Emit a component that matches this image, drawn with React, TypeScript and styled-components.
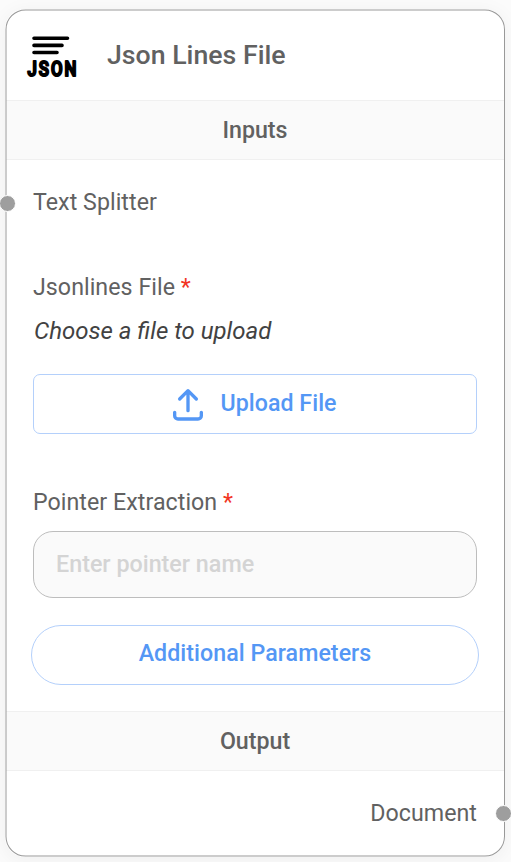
import React from "react";
import styled, { createGlobalStyle } from "styled-components";

const GlobalStyle = createGlobalStyle`
  *, *::before, *::after { box-sizing: border-box; }
  body {
    margin: 0;
    background: #fbfbfb;
    font-family: Roboto, "Liberation Sans", sans-serif;
    color: #616161;
  }
`;

const Canvas = styled.main`
  height: 862px;
  padding: 9px 6px 5px 5px;
  overflow: hidden;
`;

const NodeCard = styled.article`
  position: relative;
  height: 848px;
  display: flex;
  flex-direction: column;
  padding: 2px 1px;
  border-radius: 20px;
  background: #fff;
  box-shadow: 0 3px 20px rgba(0, 0, 0, 0.05);

  &::before {
    content: "";
    position: absolute;
    top: 0;
    left: 0;
    width: 499px;
    height: 847px;
    border: 1px solid #999;
    border-radius: 20px;
    transform: translate(0.5px, 0.5px) scaleX(1.001);
    transform-origin: left top;
    pointer-events: none;
  }
`;

const Header = styled.header`
  height: 89px;
  flex: none;
  display: flex;
  align-items: center;
  padding: 0 0 2px 20px;
`;

const Logo = styled.svg`
  width: 54px;
  height: 54px;
  flex: none;
`;

const Title = styled.h1`
  margin: 0 0 0 27px;
  font-size: 26.7px;
  line-height: 36px;
  font-weight: 500;
`;

const SectionBar = styled.h2`
  height: 60px;
  flex: none;
  margin: 0;
  display: flex;
  align-items: center;
  justify-content: center;
  background: #fafafa;
  border: solid #f0f0f0;
  border-width: 1px 0;
  font-size: 23.2px;
  font-weight: 500;
`;

const Body = styled.section`
  height: 551px;
  flex: none;
  padding: 27px 27px 0 27px;
`;

const Port = styled.div<{ $side: "left" | "right" }>`
  position: relative;
  height: 30px;
  line-height: 30px;
  font-size: 23.2px;
  letter-spacing: 0.05px;
  text-align: ${(p) => p.$side};

  &::after {
    content: "";
    position: absolute;
    top: ${(p) => (p.$side === "left" ? 8 : 7)}px;
    ${(p) => (p.$side === "left" ? "left: -34px;" : "right: -35px;")}
    width: 17px;
    height: 17px;
    border: 1px solid #fff;
    border-radius: 50%;
    background: #9e9e9e;
  }
`;

const Field = styled.div<{ $gap: number }>`
  margin-top: ${(p) => p.$gap}px;
`;

const Label = styled.label`
  display: block;
  height: 30px;
  line-height: 30px;
  font-size: 23.2px;
  letter-spacing: 0.05px;
`;

const Required = styled.span`
  color: #f23423;
`;

const FileHint = styled.p`
  margin: 14px 0 0 1px;
  height: 30px;
  line-height: 30px;
  font-size: 24px;
  font-style: italic;
  color: #424242;
`;

const UploadButton = styled.button`
  width: 444px;
  height: 60px;
  margin-top: 28px;
  padding: 0 5px 2px 0;
  display: flex;
  align-items: center;
  justify-content: center;
  gap: 12px;
  border: 1px solid #b4d0fb;
  border-radius: 7px;
  background: #fff;
  color: #5497f5;
  font: 500 23.2px/30px Roboto, sans-serif;
  letter-spacing: 0.05px;
`;

const UploadIcon = styled.svg`
  width: 40px;
  height: 40px;
  margin-top: 1px;
`;

const PointerInput = styled.input`
  display: block;
  width: 444px;
  height: 67px;
  margin-top: 14px;
  padding: 0 22px 2px;
  border: 1px solid #bdbdbd;
  border-radius: 20px;
  background: #fafafa;
  font: 500 23.3px/30px Roboto, sans-serif;

  &::placeholder { color: #d4d4d4; opacity: 1; }
`;

const ParametersButton = styled.button`
  display: block;
  width: 448px;
  height: 60px;
  margin: 27px 0 0 -2px;
  padding: 0 0 4px;
  border: 1px solid #b4d0fb;
  border-radius: 30px;
  background: #fff;
  color: #5497f5;
  font: 500 23.2px/30px Roboto, sans-serif;
  letter-spacing: 0.05px;
`;

const Footer = styled.footer`
  padding: 27px 27px 0 27px;
`;

export default function App() {
  return (
    <>
      <GlobalStyle />
      <Canvas>
        <NodeCard>
          <Header>
            <Logo viewBox="0 0 54 54" aria-label="JSON">
              <path d="M8 10.3H41.5M8 17.4H36M8 24.5H31" stroke="#000" strokeWidth="3.6" strokeLinecap="round" />
              <text
                transform="translate(1.6 47.8) scale(0.87 1)"
                letterSpacing="2.2"
                fontFamily="Roboto" fontSize="19.3" fontWeight="500"
                stroke="#000" strokeWidth="2" strokeLinejoin="round"
              >JSON</text>
            </Logo>
            <Title>Json Lines File</Title>
          </Header>
          <SectionBar>Inputs</SectionBar>
          <Body>
            <Port $side="left">Text Splitter</Port>
            <Field $gap={55}>
              <Label>Jsonlines File <Required>*</Required></Label>
              <FileHint>Choose a file to upload</FileHint>
              <UploadButton>
                <UploadIcon viewBox="0 0 24 24" fill="none" stroke="currentColor" strokeWidth="2" strokeLinecap="round" strokeLinejoin="round">
                  <path d="M4 17v2a2 2 0 0 0 2 2h12a2 2 0 0 0 2-2v-2M7 9l5-5 5 5M12 4v12" />
                </UploadIcon>
                Upload File
              </UploadButton>
            </Field>
            <Field $gap={53}>
              <Label htmlFor="pointer">Pointer Extraction <Required>*</Required></Label>
              <PointerInput id="pointer" placeholder="Enter pointer name" />
            </Field>
            <ParametersButton>Additional Parameters</ParametersButton>
          </Body>
          <SectionBar>Output</SectionBar>
          <Footer>
            <Port $side="right">Document</Port>
          </Footer>
        </NodeCard>
      </Canvas>
    </>
  );
}
